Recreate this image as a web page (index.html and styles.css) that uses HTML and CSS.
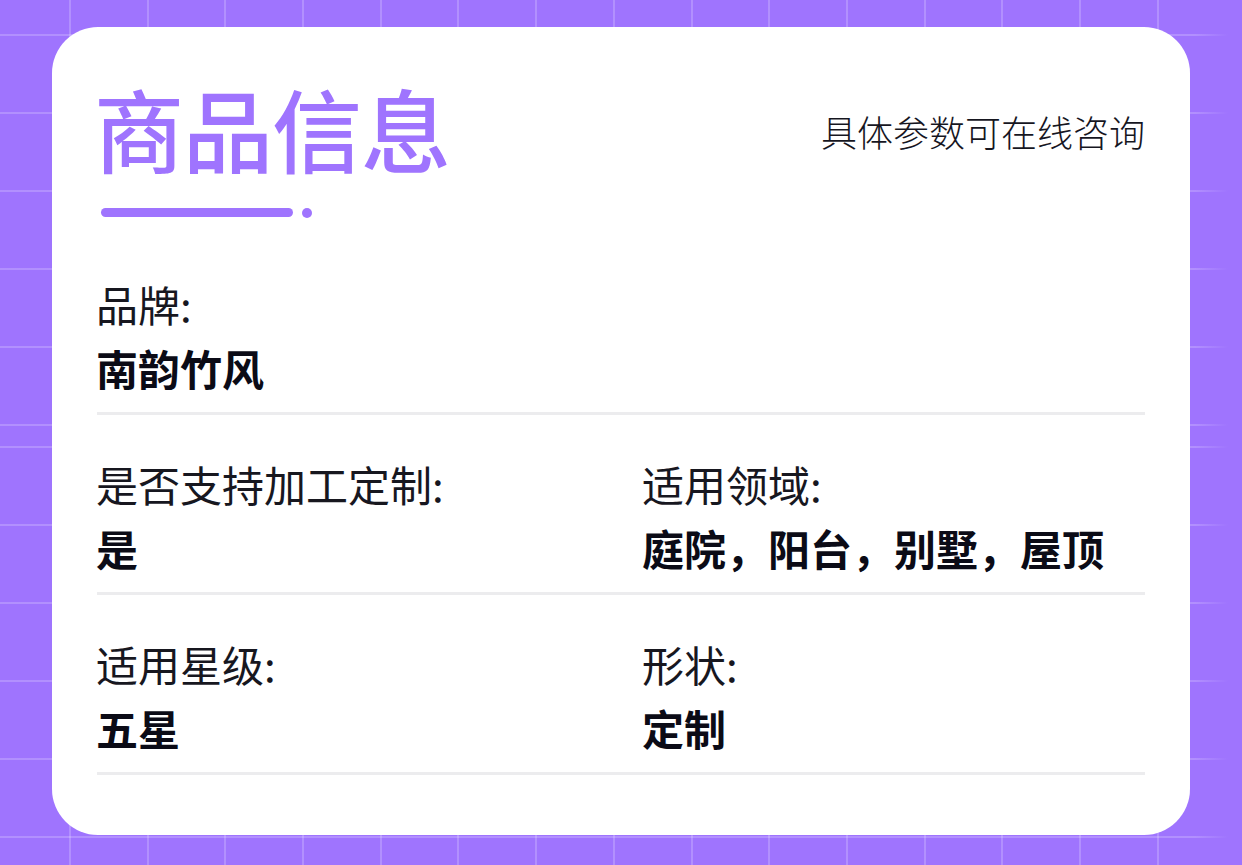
FILE: index.html
```html
<!DOCTYPE html>
<html lang="zh-CN">
<head>
<meta charset="utf-8">
<title>商品信息</title>
<link rel="stylesheet" href="styles.css">
</head>
<body>
<main class="page">
  <section class="card">
    <header class="card-head">
      <div class="title-block">
        <h1 class="title">商品信息</h1>
        <div class="title-deco"><span class="bar"></span><span class="dot"></span></div>
      </div>
      <p class="subtitle">具体参数可在线咨询</p>
    </header>
    <div class="rows">
      <div class="row">
        <div class="field">
          <div class="label">品牌:</div>
          <div class="value">南韵竹风</div>
        </div>
      </div>
      <div class="row">
        <div class="field">
          <div class="label">是否支持加工定制:</div>
          <div class="value">是</div>
        </div>
        <div class="field">
          <div class="label">适用领域:</div>
          <div class="value">庭院，阳台，别墅，屋顶</div>
        </div>
      </div>
      <div class="row">
        <div class="field">
          <div class="label">适用星级:</div>
          <div class="value">五星</div>
        </div>
        <div class="field">
          <div class="label">形状:</div>
          <div class="value">定制</div>
        </div>
      </div>
    </div>
  </section>
</main>
</body>
</html>
```

FILE: styles.css
```css
* {
  box-sizing: border-box;
}

html, body {
  margin: 0;
  padding: 0;
}

body {
  width: 1242px;
  height: 865px;
  font-family: "Noto Sans CJK SC", "Noto Sans", sans-serif;
  background-color: #9f74fe;
  background-image:
    linear-gradient(to right, rgba(159, 116, 254, 0) 1195px, #9f74fe 1228px),
    repeating-linear-gradient(to right, transparent 0 69px, rgba(255, 255, 255, 0.2) 69px 71px, transparent 71px 77.7px),
    repeating-linear-gradient(to bottom, transparent 0 34px, rgba(255, 255, 255, 0.2) 34px 36px, transparent 36px 78px),
    repeating-linear-gradient(to bottom, transparent 0 10px, rgba(255, 255, 255, 0.2) 10px 12px, transparent 12px 78px);
  background-size: 100% 100%, 100% 100%, 100% 436px, 100% 429px;
  background-position: 0 0, 0 0, 0 0, 0 436px;
  background-repeat: no-repeat;
  overflow: hidden;
}

.page {
  padding: 27px 52px 30px;
}

.card {
  height: 808px;
  background: #ffffff;
  border-radius: 46px;
  padding: 55px 45px 59px;
}

.card-head {
  display: flex;
  justify-content: space-between;
  align-items: flex-start;
}

.title {
  margin: 0 0 0 -3px;
  font-size: 90px;
  line-height: 90px;
  font-weight: 500;
  color: #9f74fe;
  letter-spacing: -1px;
}

.title-deco {
  margin-top: 36px;
  display: flex;
  align-items: center;
  gap: 9px;
  padding-left: 4px;
  height: 9px;
}

.bar {
  width: 192px;
  height: 9px;
  border-radius: 5px;
  background: #9f74fe;
}

.dot {
  width: 10px;
  height: 10px;
  border-radius: 50%;
  background: #9f74fe;
}

.subtitle {
  margin: 31px 0 0;
  font-size: 36px;
  line-height: 36px;
  font-weight: 300;
  color: #16161f;
}

.rows {
  margin-top: 18px;
}

.row {
  display: grid;
  grid-template-columns: 1fr 1fr;
  column-gap: 44px;
  padding: 48px 0 23px;
  border-bottom: 3px solid #ececee;
}

.label {
  font-size: 42px;
  line-height: 42px;
  font-weight: 400;
  color: #17171f;
  margin-left: -1px;
}

.value {
  margin-top: 22px;
  margin-left: -1px;
  font-size: 42px;
  line-height: 42px;
  font-weight: 700;
  color: #0b0b16;
  white-space: nowrap;
}
```
